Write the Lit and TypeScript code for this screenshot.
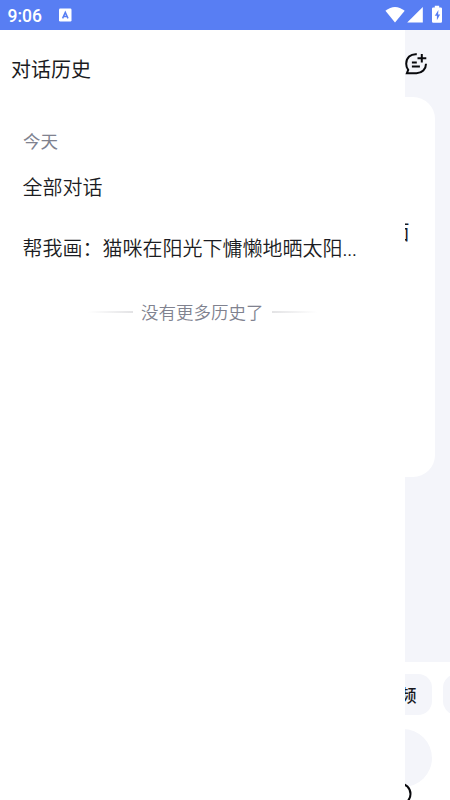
import { LitElement, html, css } from "lit";
import { customElement } from "lit/decorators.js";

@customElement("status-bar")
class StatusBar extends LitElement {
  static styles = css`
    :host {
      display: flex;
      align-items: center;
      height: 30px;
      flex: none;
      background: #587ef3;
      color: #fff;
      font: 500 17.5px/30px Roboto, sans-serif;
    }
    .time { margin-left: 7.5px; width: 51.5px; padding-top: 1px; }
    .grow { flex: 1; }
    svg { display: block; }
    .status { width: 66px; height: 30px; }
  `;
  render() {
    return html`
      <span class="time">9:06</span>
      <svg width="13" height="14" viewBox="0 0 13 14">
        <rect width="12.5" height="13" y=".5" rx="1.2" fill="#fff" />
        <path d="M3.6 10.4 6.3 4.400 9 10.400M4.600 8.400h3.400" fill="none" stroke="#587ef3" stroke-width="1.5" />
      </svg>
      <span class="grow"></span>
      <svg class="status" viewBox="384 0 66 30">
        <path d="M385.4 10.8Q395 3.2 404.7 10.8L395 22.6Z" fill="#fff" />
        <path d="M422.8 7v15.6h-15.6Z" fill="#fff" />
        <path d="M434.8 5.7h4.4v1.8h1.6q1.2 0 1.2 1.2v12.8q0 1.2-1.2 1.2h-7.6q-1.2 0-1.2-1.2V8.7q0-1.2 1.2-1.2h1.6Z" fill="#fff" />
        <path d="M438.4 10 434.8 15.8h2.1v4.4l3.2-5.8h-2Z" fill="#587ef3" />
      </svg>
    `;
  }
}

@customElement("chat-page")
class ChatPage extends LitElement {
  static styles = css`
    :host {
      display: flex;
      flex-direction: column;
      flex: 1;
      min-height: 0;
      background: #f4f5fa;
      color: #17181d;
    }
    svg { display: block; }
    .top {
      height: 67px;
      flex: none;
      box-sizing: border-box;
      display: flex;
      justify-content: flex-end;
      padding: 22px 22px 0 0;
    }
    .card {
      margin: 0 15px;
      height: 380px;
      flex: none;
      box-sizing: border-box;
      border-radius: 22px;
      background: #fff;
      padding: 120px 25.5px 0 0;
      text-align: right;
      font-size: 20px;
      line-height: 30px;
    }
    .grow { flex: 1; }
    .bottom {
      height: 138px;
      flex: none;
      box-sizing: border-box;
      background: #fff;
      padding-top: 12px;
      overflow: hidden;
    }
    .chips { display: flex; gap: 11px; margin-left: 332px; }
    .chip {
      width: 100px;
      height: 41px;
      flex: none;
      box-sizing: border-box;
      padding-right: 15.5px;
      border-radius: 14px;
      background: #f4f5fa;
      text-align: right;
      font-size: 17px;
      font-weight: 500;
      line-height: 41px;
    }
    .input {
      margin: 14px 18px 0;
      height: 58px;
      border-radius: 29px;
      background: #f4f5fa;
    }
    .tab { display: flex; justify-content: flex-end; padding-right: 38px; margin-top: -5px; }
  `;
  render() {
    return html`
      <div class="top">
        <svg width="24" height="24" viewBox="404 52 24 24" fill="none" stroke="#08090c" stroke-width="2">
          <path d="M416.8 54.2C410.5 53.6 406.2 58 406.2 63.7Q406.2 67.3 408.2 69.9L406.9 73.2H416.5C422 73.2 426 69.2 426 63.7" />
          <path d="M421.8 54v8.5M417.5 58.2h8.8M411.9 62.4h4.9M411.9 66.5h8" />
        </svg>
      </div>
      <div class="card">面</div>
      <div class="grow"></div>
      <div class="bottom">
        <div class="chips">
          <div class="chip">视频</div>
          <div class="chip"></div>
        </div>
        <div class="input"></div>
        <div class="tab">
          <svg width="24" height="24" viewBox="0 0 24 24">
            <circle cx="12" cy="12" r="10.5" fill="none" stroke="#08090c" stroke-width="2" />
          </svg>
        </div>
      </div>
    `;
  }
}

@customElement("history-drawer")
class HistoryDrawer extends LitElement {
  static styles = css`
    :host {
      display: flex;
      flex-direction: column;
      box-sizing: border-box;
      background: #fff;
      color: #1b1c22;
      font-size: 20px;
      line-height: 30px;
    }
    .title { padding: 24px 0 0 11px; }
    .day { color: #80828f; font-size: 17.5px; padding: 42px 0 0 23px; }
    .row {
      height: 30px;
      margin: 16px 0 0 22.5px;
      font-weight: 350;
      white-space: nowrap;
    }
    .row + .row { margin-top: 31px; }
    .dots { font: 400 17px/1 "Liberation Sans", sans-serif; }
    .end {
      display: flex;
      align-items: center;
      gap: 8px;
      height: 30px;
      margin: 34px 0 0 88px;
      color: #80828f;
      font-size: 17.5px;
      font-weight: 350;
    }
    .line { width: 45px; height: 2px; margin-top: -1px; background: linear-gradient(90deg, #fff, #e3e3e5); }
    .line.right { transform: scaleX(-1); }
  `;
  render() {
    return html`
      <div class="title">对话历史</div>
      <div class="day">今天</div>
      <div class="row">全部对话</div>
      <div class="row">帮我画：猫咪在阳光下慵懒地晒太阳<span class="dots">...</span></div>
      <div class="end"><i class="line"></i><span>没有更多历史了</span><i class="line right"></i></div>
    `;
  }
}

@customElement("app-root")
class AppRoot extends LitElement {
  static styles = css`
    :host {
      display: flex;
      flex-direction: column;
      position: relative;
      width: 450px;
      height: 800px;
      overflow: hidden;
      font-family: "Noto Sans CJK SC", sans-serif;
    }
    history-drawer { position: absolute; top: 30px; bottom: 0; left: 0; width: 405px; }
  `;
  render() {
    return html`
      <status-bar></status-bar>
      <chat-page></chat-page>
      <history-drawer></history-drawer>
    `;
  }
}
